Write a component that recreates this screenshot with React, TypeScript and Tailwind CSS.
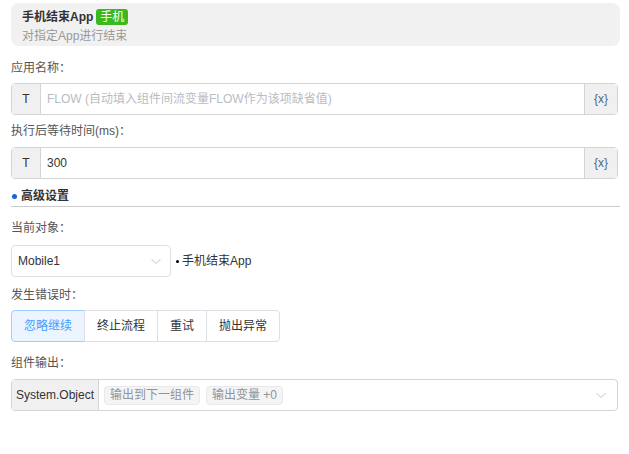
import React from "react"

const font = { fontFamily: '"Liberation Sans", "Noto Sans CJK SC", sans-serif' }

const Label = ({ text, mt }: { text: string; mt: string }) => (
  <div className={`${mt} h-5 leading-5 text-[12px] text-[#555]`}>{text}</div>
)

const VarInput = ({ value, placeholder, mt }: { value?: string; placeholder?: string; mt: string }) => (
  <div className={`${mt} flex h-[32px] rounded border border-[#d4d4d4]`}>
    <div className="flex w-[29px] items-center justify-center border-r border-[#d4d4d4] bg-[#f0f0f0] text-[12px] text-[#333]">
      T
    </div>
    <div className="flex flex-1 items-center pl-[6px] text-[12px]">
      {value ? (
        <span className="text-[#333]">{value}</span>
      ) : (
        <span className="text-[#b8bcc4]">{placeholder}</span>
      )}
    </div>
    <div className="flex w-[33px] items-center justify-center border-l border-[#d4d4d4] bg-[#f0f0f0] text-[12px] text-[#4a6a8c]">
      {"{x}"}
    </div>
  </div>
)

const Chevron = () => (
  <svg width="12" height="12" viewBox="0 0 12 12" fill="none">
    <path d="M1.5 4 L6 8.5 L10.5 4" stroke="#c0c4cc" strokeWidth="1" />
  </svg>
)

const errorOptions = ["忽略继续", "终止流程", "重试", "抛出异常"]
const widths = ["w-[74px]", "w-[74px]", "w-[50px]", "w-[74px]"]

export default function App() {
  return (
    <div style={font} className="w-[629px] bg-white px-[11px] pb-10">
      <div className="mt-[3px] -mr-[2px] h-[43px] rounded-lg bg-[#f1f1f1] pl-[11px]">
        <div className="flex items-center pt-[5px]">
          <span className="text-[12px] font-bold text-[#333]">手机结束App</span>
          <span className="ml-[3px] rounded-[3px] bg-[#3cb81f] px-[4px] text-[12px] leading-[16px] text-white">
            手机
          </span>
        </div>
        <div className="mt-[3px] text-[12px] leading-[14px] text-[#999]">对指定App进行结束</div>
      </div>

      <Label text="应用名称：" mt="mt-[12px]" />
      <VarInput mt="mt-[5px]" placeholder="FLOW (自动填入组件间流变量FLOW作为该项缺省值)" />

      <Label text="执行后等待时间(ms)：" mt="mt-[6px]" />
      <VarInput mt="mt-[6px]" value="300" />

      <div className="-mr-[2px] mt-[7px] flex h-[21px] items-center border-b border-[#ccc]">
        <span className="ml-[1px] mr-[4px] h-[5px] w-[5px] rounded-full bg-[#1565d8]" />
        <span className="text-[12px] font-bold text-[#333]">高级设置</span>
      </div>

      <Label text="当前对象：" mt="mt-[11px]" />
      <div className="mt-[7px] flex items-center">
        <div className="flex h-[32px] w-[160px] items-center justify-between rounded border border-[#dcdfe6] pl-[6px] pr-[8px] text-[12px] text-[#333]">
          <span>Mobile1</span>
          <Chevron />
        </div>
        <span className="ml-[5px] mr-[3px] h-[3px] w-[3px] rounded-full bg-black" />
        <span className="text-[12px] text-[#333]">手机结束App</span>
      </div>

      <Label text="发生错误时：" mt="mt-[8px]" />
      <div className="mt-[5px] flex">
        {errorOptions.map((o, i) => (
          <div
            key={o}
            className={`${widths[i]} flex h-[32px] items-center justify-center border text-[12px] ${
              i === 0
                ? "rounded-l border-[#a0cfff] bg-[#ecf5ff] text-[#409eff]"
                : "-ml-px border-[#dcdfe6] text-[#333]"
            } ${i === errorOptions.length - 1 ? "rounded-r" : ""}`}
          >
            {o}
          </div>
        ))}
      </div>

      <Label text="组件输出：" mt="mt-[11px]" />
      <div className="mt-[6px] flex h-[32px] rounded border border-[#d4d4d4]">
        <div className="flex w-[87px] items-center justify-center border-r border-[#d4d4d4] bg-[#f0f0f0] text-[12px] text-[#333]">
          System.Object
        </div>
        <div className="flex flex-1 items-center gap-[6px] pl-[5px] pr-[10px]">
          <span className="rounded border border-[#e9e9eb] bg-[#f4f4f5] px-[5px] text-[12px] leading-[17px] text-[#909399]">
            输出到下一组件
          </span>
          <span className="rounded border border-[#e9e9eb] bg-[#f4f4f5] px-[5px] text-[12px] leading-[17px] text-[#909399]">
            输出变量 +0
          </span>
          <span className="flex-1" />
          <Chevron />
        </div>
      </div>
    </div>
  )
}
